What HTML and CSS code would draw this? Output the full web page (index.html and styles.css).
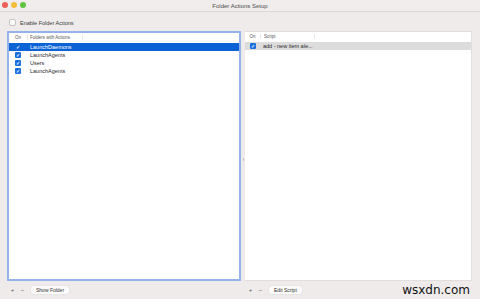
FILE: index.html
```html
<!DOCTYPE html>
<html>
  <head>
    <meta charset="UTF-8">
    <title>Folder Actions Setup</title>
    <link rel="stylesheet" href="styles.css">
  </head>
  <body>
    <div class="window">
      <div class="title-bar">
        <div class="lights">
          <span class="light red"></span>
          <span class="light yellow"></span>
          <span class="light green"></span>
        </div>
        <div class="title">Folder Actions Setup</div>
      </div>

      <div class="enable">
        <span class="box"></span>
        <span>Enable Folder Actions</span>
      </div>

      <div class="panes">
        <div class="pane">
          <div class="table left focused">
            <div class="head">
              <span class="col-on">On</span>
              <span class="col-name">Folders with Actions</span>
            </div>
            <div class="row selected">
              <span class="col-on"><span class="check">&#10003;</span></span>
              <span class="col-name">LaunchDaemons</span>
            </div>
            <div class="row">
              <span class="col-on"><span class="check">&#10003;</span></span>
              <span class="col-name">LaunchAgents</span>
            </div>
            <div class="row">
              <span class="col-on"><span class="check">&#10003;</span></span>
              <span class="col-name">Users</span>
            </div>
            <div class="row">
              <span class="col-on"><span class="check">&#10003;</span></span>
              <span class="col-name">LaunchAgents</span>
            </div>
          </div>
          <div class="tools">
            <span class="pm">+</span>
            <span class="pm">&minus;</span>
            <span class="btn">Show Folder</span>
          </div>
        </div>

        <div class="splitter"><span class="dot"></span></div>

        <div class="pane">
          <div class="table right">
            <div class="head">
              <span class="col-on">On</span>
              <span class="col-name">Script</span>
            </div>
            <div class="row grey">
              <span class="col-on"><span class="check">&#10003;</span></span>
              <span class="col-name">add - new item ale...</span>
            </div>
          </div>
          <div class="tools">
            <span class="pm">+</span>
            <span class="pm">&minus;</span>
            <span class="btn">Edit Script</span>
            <span class="mark">wsxdn.com</span>
          </div>
        </div>
      </div>
    </div>
  </body>
</html>
```

FILE: styles.css
```css
body {
  margin: 0;
  padding: 0;
  background-color: #efebeb;
  font-family: "Liberation Sans", Arial, sans-serif;
  color: #2a2a2a;
}

.window {
  width: 480px;
  height: 299px;
  display: flex;
  flex-direction: column;
}

.title-bar {
  height: 11px;
  display: flex;
  align-items: center;
  justify-content: center;
  position: relative;
  border-bottom: 1px solid #dcd7d7;
  background-color: #f1eded;
}

.lights {
  position: absolute;
  left: 2px;
  top: 2px;
  display: flex;
  gap: 3px;
}

.light {
  width: 6px;
  height: 6px;
  border-radius: 50%;
  display: inline-block;
}
.red { background-color: #ec5f57; }
.yellow { background-color: #f2be3c; }
.green { background-color: #5fc43f; }

.title {
  font-size: 6px;
  color: #4a4a4a;
}

.enable {
  display: flex;
  align-items: center;
  gap: 4px;
  padding: 7px 0 0 9px;
  height: 7px;
  font-size: 5.5px;
  color: #3a3a3a;
}

.box {
  width: 5px;
  height: 5px;
  border: 1px solid #c9c4c4;
  border-radius: 2px;
  background: #fbfafa;
}

.panes {
  display: flex;
  padding: 5px 8px 0 7px;
  flex: 1;
}

.pane {
  display: flex;
  flex-direction: column;
}
.pane:first-child { width: 234px; }
.pane:last-child { width: 227px; }

.splitter {
  width: 4px;
  display: flex;
  align-items: center;
  justify-content: center;
}
.dot {
  width: 1px;
  height: 3px;
  background: #c9c4c4;
  margin-top: -12px;
}

.table {
  height: 250px;
  background: #ffffff;
  box-sizing: border-box;
}
.table.focused {
  border: 2px solid #93b3ea;
}
.table.right {
  border: 1px solid #e2dede;
  border-left: 0;
}

.head {
  height: 9px;
  display: flex;
  align-items: center;
  font-size: 4.5px;
  color: #555;
  margin-bottom: 1px;
}
.head .col-name {
  border-left: 1px solid #e8e8e8;
  padding-left: 2px;
  width: 52px;
  border-right: 1px solid #e8e8e8;
}
.table.right .head .col-name { width: 50px; }

.row {
  height: 8px;
  display: flex;
  align-items: center;
  font-size: 5.5px;
  color: #2a2a2a;
}
.row.selected {
  background: #0b63d6;
  color: #fff;
}
.row.grey {
  background: #dcdcdc;
}

.col-on {
  width: 18px;
  display: flex;
  justify-content: center;
}
.col-name { padding-left: 3px; }
.left .col-on { width: 18px; }
.right .col-on { width: 15px; }
.right .head .col-name, .right .row .col-name { padding-left: 3px; }

.check {
  width: 6px;
  height: 6px;
  border-radius: 1px;
  background: #1a6fe0;
  color: #fff;
  font-size: 5px;
  line-height: 6px;
  text-align: center;
  font-weight: bold;
}
.selected .check {
  background: #0b63d6;
  border: 0;
}

.tools {
  display: flex;
  align-items: center;
  gap: 3px;
  height: 17px;
  padding-left: 2px;
  font-size: 5px;
  color: #555;
}

.pm {
  width: 7px;
  text-align: center;
  font-size: 6px;
}

.btn {
  background: #fbfafa;
  border-radius: 2px;
  padding: 1px 5px;
  box-shadow: 0 0 1px rgba(0, 0, 0, 0.25);
  color: #333;
  margin-left: 2px;
}

.mark {
  margin-left: auto;
  font-size: 12px;
  color: #111;
  font-family: "DejaVu Sans", sans-serif;
  margin-right: 2px;
}
```
